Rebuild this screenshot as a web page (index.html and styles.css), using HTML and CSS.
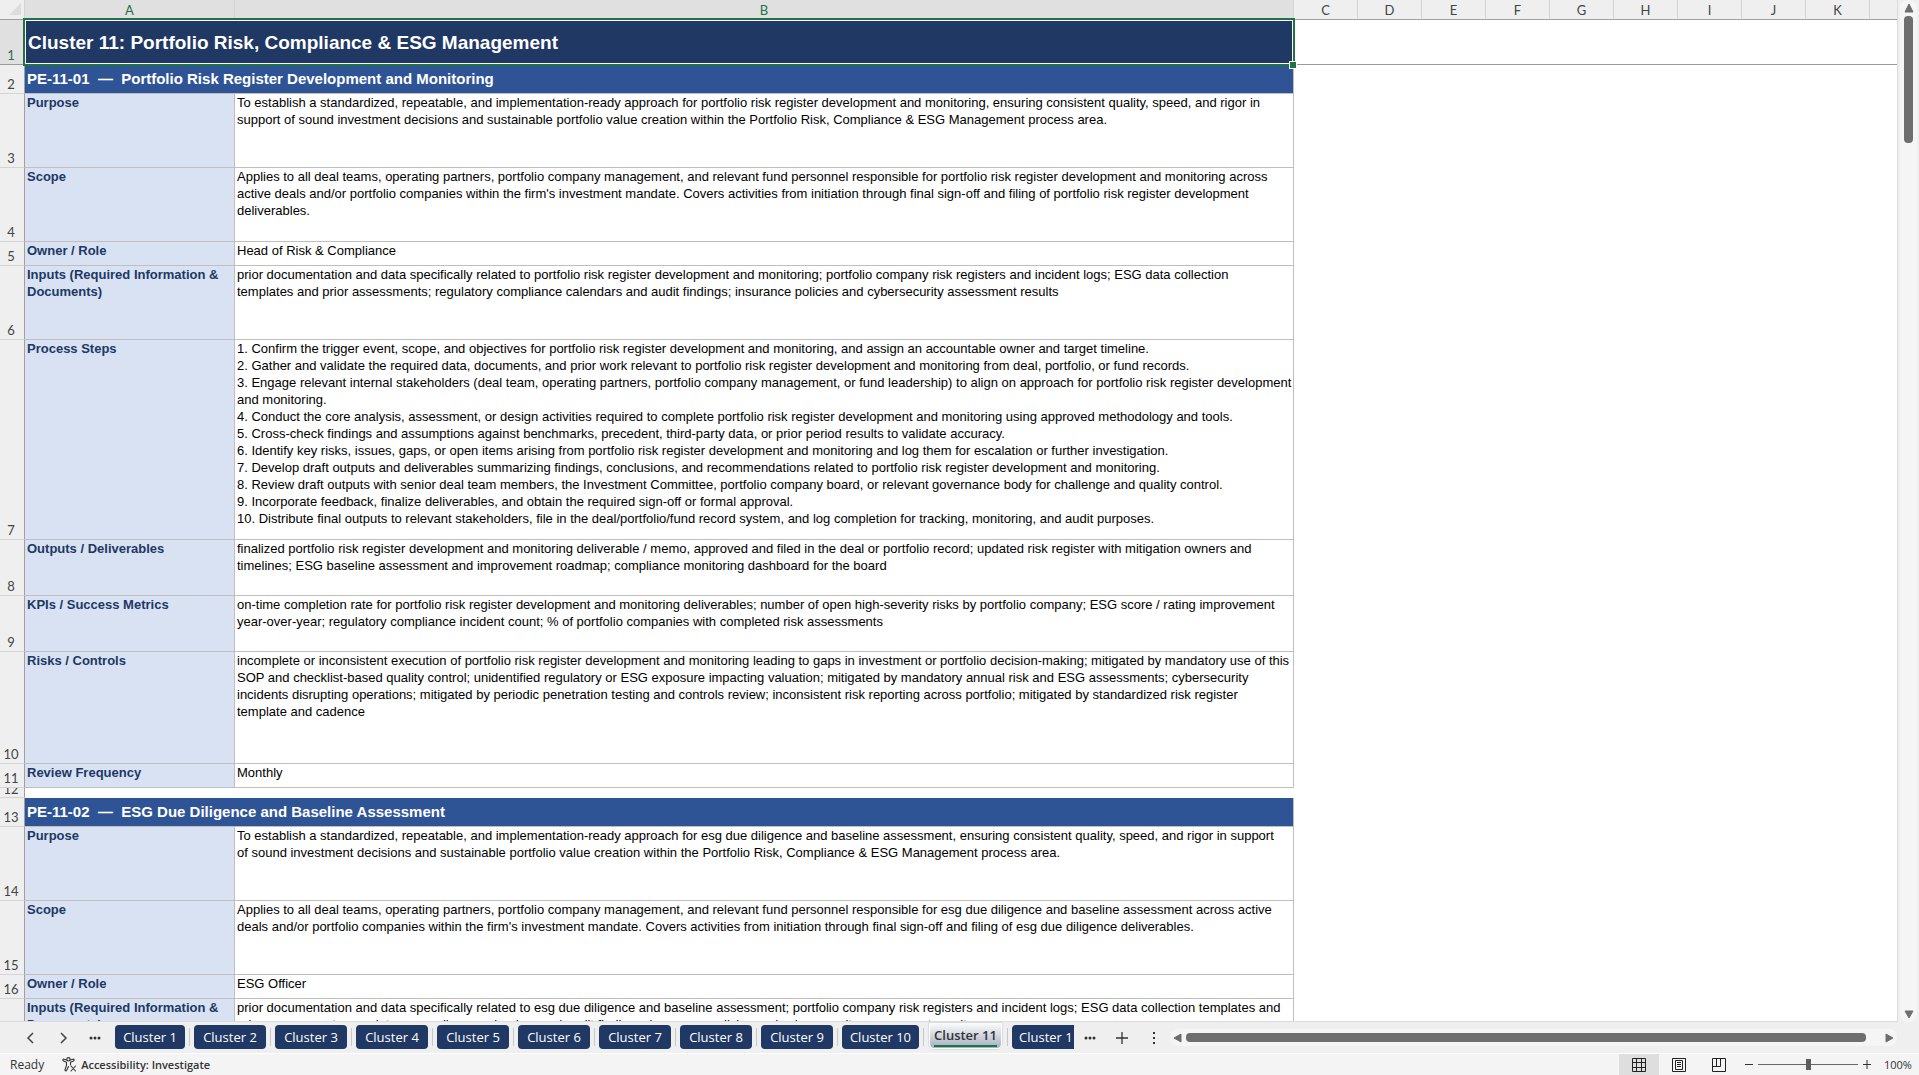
FILE: index.html
```
<!DOCTYPE html>
<html lang="en">
<head>
  <meta charset="UTF-8" />
  <meta name="viewport" content="width=device-width, initial-scale=1" />
  <title>Cluster 11</title>
  <link rel="stylesheet" href="styles.css">
</head>
<body>
  <div class="workspace">
    <div class="grid-area">
      <table class="sheet">
        <colgroup>
          <col class="col-num"><col class="col-a"><col class="col-b">
          <col class="col-std"><col class="col-std"><col class="col-std"><col class="col-std"><col class="col-std">
          <col class="col-std"><col class="col-std"><col class="col-std"><col class="col-std"><col>
        </colgroup>
        <thead>
          <tr>
            <th class="corner"><svg width="12" height="12" viewBox="0 0 12 12" aria-hidden="true"><path d="M12 0v12H0z" fill="#dcdcdc"/></svg></th>
            <th class="active">A</th><th class="active">B</th>
            <th>C</th><th>D</th><th>E</th><th>F</th><th>G</th><th>H</th><th>I</th><th>J</th><th>K</th><th></th>
          </tr>
        </thead>
        <tbody>
          <tr class="row-title">
            <th class="active">1</th>
            <td class="title" colspan="2">Cluster 11: Portfolio Risk, Compliance &amp; ESG Management<span class="selection"></span><span class="handle"></span></td>
            <td class="blank" colspan="10"></td>
          </tr>
          <tr class="row-section">
            <th>2</th>
            <td class="section" colspan="2">PE-11-01 &nbsp;—&nbsp; Portfolio Risk Register Development and Monitoring</td>
            <td class="blank" colspan="10"></td>
          </tr>
          <tr class="row-medium">
            <th>3</th>
            <td class="label">Purpose</td>
            <td class="text">To establish a standardized, repeatable, and implementation-ready approach for portfolio risk register development and monitoring, ensuring consistent quality, speed, and rigor in<br>support of sound investment decisions and sustainable portfolio value creation within the Portfolio Risk, Compliance &amp; ESG Management process area.</td>
            <td class="blank" colspan="10"></td>
          </tr>
          <tr class="row-medium">
            <th>4</th>
            <td class="label">Scope</td>
            <td class="text">Applies to all deal teams, operating partners, portfolio company management, and relevant fund personnel responsible for portfolio risk register development and monitoring across<br>active deals and/or portfolio companies within the firm's investment mandate. Covers activities from initiation through final sign-off and filing of portfolio risk register development<br>deliverables.</td>
            <td class="blank" colspan="10"></td>
          </tr>
          <tr class="row-single">
            <th>5</th>
            <td class="label">Owner / Role</td>
            <td class="text">Head of Risk &amp; Compliance</td>
            <td class="blank" colspan="10"></td>
          </tr>
          <tr class="row-medium">
            <th>6</th>
            <td class="label">Inputs (Required Information &amp;<br>Documents)</td>
            <td class="text">prior documentation and data specifically related to portfolio risk register development and monitoring; portfolio company risk registers and incident logs; ESG data collection<br>templates and prior assessments; regulatory compliance calendars and audit findings; insurance policies and cybersecurity assessment results</td>
            <td class="blank" colspan="10"></td>
          </tr>
          <tr class="row-steps">
            <th>7</th>
            <td class="label">Process Steps</td>
            <td class="text">1. Confirm the trigger event, scope, and objectives for portfolio risk register development and monitoring, and assign an accountable owner and target timeline.<br>2. Gather and validate the required data, documents, and prior work relevant to portfolio risk register development and monitoring from deal, portfolio, or fund records.<br>3. Engage relevant internal stakeholders (deal team, operating partners, portfolio company management, or fund leadership) to align on approach for portfolio risk register development<br>and monitoring.<br>4. Conduct the core analysis, assessment, or design activities required to complete portfolio risk register development and monitoring using approved methodology and tools.<br>5. Cross-check findings and assumptions against benchmarks, precedent, third-party data, or prior period results to validate accuracy.<br>6. Identify key risks, issues, gaps, or open items arising from portfolio risk register development and monitoring and log them for escalation or further investigation.<br>7. Develop draft outputs and deliverables summarizing findings, conclusions, and recommendations related to portfolio risk register development and monitoring.<br>8. Review draft outputs with senior deal team members, the Investment Committee, portfolio company board, or relevant governance body for challenge and quality control.<br>9. Incorporate feedback, finalize deliverables, and obtain the required sign-off or formal approval.<br>10. Distribute final outputs to relevant stakeholders, file in the deal/portfolio/fund record system, and log completion for tracking, monitoring, and audit purposes.</td>
            <td class="blank" colspan="10"></td>
          </tr>
          <tr class="row-short">
            <th>8</th>
            <td class="label">Outputs / Deliverables</td>
            <td class="text">finalized portfolio risk register development and monitoring deliverable / memo, approved and filed in the deal or portfolio record; updated risk register with mitigation owners and<br>timelines; ESG baseline assessment and improvement roadmap; compliance monitoring dashboard for the board</td>
            <td class="blank" colspan="10"></td>
          </tr>
          <tr class="row-short">
            <th>9</th>
            <td class="label">KPIs / Success Metrics</td>
            <td class="text">on-time completion rate for portfolio risk register development and monitoring deliverables; number of open high-severity risks by portfolio company; ESG score / rating improvement<br>year-over-year; regulatory compliance incident count; % of portfolio companies with completed risk assessments</td>
            <td class="blank" colspan="10"></td>
          </tr>
          <tr class="row-risks">
            <th>10</th>
            <td class="label">Risks / Controls</td>
            <td class="text">incomplete or inconsistent execution of portfolio risk register development and monitoring leading to gaps in investment or portfolio decision-making; mitigated by mandatory use of this<br>SOP and checklist-based quality control; unidentified regulatory or ESG exposure impacting valuation; mitigated by mandatory annual risk and ESG assessments; cybersecurity<br>incidents disrupting operations; mitigated by periodic penetration testing and controls review; inconsistent risk reporting across portfolio; mitigated by standardized risk register<br>template and cadence</td>
            <td class="blank" colspan="10"></td>
          </tr>
          <tr class="row-single">
            <th>11</th>
            <td class="label">Review Frequency</td>
            <td class="text">Monthly</td>
            <td class="blank" colspan="10"></td>
          </tr>
          <tr class="row-gap">
            <th><div class="clipped">12</div></th>
            <td class="blank" colspan="12"></td>
          </tr>
          <tr class="row-section">
            <th>13</th>
            <td class="section" colspan="2">PE-11-02 &nbsp;—&nbsp; ESG Due Diligence and Baseline Assessment</td>
            <td class="blank" colspan="10"></td>
          </tr>
          <tr class="row-medium">
            <th>14</th>
            <td class="label">Purpose</td>
            <td class="text">To establish a standardized, repeatable, and implementation-ready approach for esg due diligence and baseline assessment, ensuring consistent quality, speed, and rigor in support<br>of sound investment decisions and sustainable portfolio value creation within the Portfolio Risk, Compliance &amp; ESG Management process area.</td>
            <td class="blank" colspan="10"></td>
          </tr>
          <tr class="row-medium">
            <th>15</th>
            <td class="label">Scope</td>
            <td class="text">Applies to all deal teams, operating partners, portfolio company management, and relevant fund personnel responsible for esg due diligence and baseline assessment across active<br>deals and/or portfolio companies within the firm's investment mandate. Covers activities from initiation through final sign-off and filing of esg due diligence deliverables.</td>
            <td class="blank" colspan="10"></td>
          </tr>
          <tr class="row-single">
            <th>16</th>
            <td class="label">Owner / Role</td>
            <td class="text">ESG Officer</td>
            <td class="blank" colspan="10"></td>
          </tr>
          <tr class="row-medium">
            <th></th>
            <td class="label">Inputs (Required Information &amp;<br>Documents)</td>
            <td class="text">prior documentation and data specifically related to esg due diligence and baseline assessment; portfolio company risk registers and incident logs; ESG data collection templates and<br>prior assessments; regulatory compliance calendars and audit findings; insurance policies and cybersecurity assessment results</td>
            <td class="blank" colspan="10"></td>
          </tr>
        </tbody>
      </table>
    </div>
    <div class="vscroll">
      <button class="arrow" aria-label="Scroll up"><svg width="10" height="10" viewBox="0 0 10 10"><path d="M5 1l4 8H1z" fill="#6e6e6e" stroke="#6e6e6e" stroke-linejoin="round"/></svg></button>
      <div class="vthumb"></div>
      <button class="arrow" aria-label="Scroll down"><svg width="10" height="10" viewBox="0 0 10 10"><path d="M5 9l4-7H1z" fill="#6e6e6e" stroke="#6e6e6e" stroke-linejoin="round"/></svg></button>
    </div>
  </div>

  <div class="tab-bar">
    <div class="tab-nav">
      <button aria-label="Previous sheet"><svg width="10" height="12" viewBox="0 0 10 12"><path d="M7 1L2 6l5 5" fill="none" stroke="#444" stroke-width="1.5"/></svg></button>
      <button aria-label="Next sheet"><svg width="10" height="12" viewBox="0 0 10 12"><path d="M3 1l5 5-5 5" fill="none" stroke="#444" stroke-width="1.5"/></svg></button>
      <button aria-label="More sheets"><svg width="12" height="4" viewBox="0 0 12 4"><g fill="#333"><circle cx="2" cy="2" r="1.5"/><circle cx="6" cy="2" r="1.5"/><circle cx="10" cy="2" r="1.5"/></g></svg></button>
    </div>
    <div class="tabs">
      <button class="tab first">Cluster 1</button>
      <i class="sep"></i>
      <button class="tab">Cluster 2</button>
      <i class="sep"></i>
      <button class="tab">Cluster 3</button>
      <i class="sep"></i>
      <button class="tab">Cluster 4</button>
      <i class="sep"></i>
      <button class="tab">Cluster 5</button>
      <i class="sep"></i>
      <button class="tab">Cluster 6</button>
      <i class="sep"></i>
      <button class="tab">Cluster 7</button>
      <i class="sep"></i>
      <button class="tab">Cluster 8</button>
      <i class="sep"></i>
      <button class="tab">Cluster 9</button>
      <i class="sep"></i>
      <button class="tab wide">Cluster 10</button>
      <i class="sep"></i>
      <button class="tab current"><span>Cluster 11</span></button>
      <i class="sep"></i>
      <button class="tab cut">Cluster 1</button>
    </div>
    <div class="tab-tools">
      <button aria-label="More sheets"><svg width="12" height="4" viewBox="0 0 12 4"><g fill="#333"><circle cx="2" cy="2" r="1.5"/><circle cx="6" cy="2" r="1.5"/><circle cx="10" cy="2" r="1.5"/></g></svg></button>
      <button aria-label="New sheet"><svg width="12" height="12" viewBox="0 0 12 12"><path d="M6 0v12M0 6h12" stroke="#333" stroke-width="1.3"/></svg></button>
      <button aria-label="Resize tabs"><svg width="4" height="12" viewBox="0 0 4 12"><g fill="#333"><rect x="1" y="0" width="2" height="2"/><rect x="1" y="5" width="2" height="2"/><rect x="1" y="10" width="2" height="2"/></g></svg></button>
    </div>
    <div class="hscroll">
      <button class="arrow" aria-label="Scroll left"><svg width="10" height="10" viewBox="0 0 10 10"><path d="M1 5l7-4v8z" fill="#6e6e6e" stroke="#6e6e6e" stroke-linejoin="round"/></svg></button>
      <div class="hthumb"></div>
      <button class="arrow" aria-label="Scroll right"><svg width="10" height="10" viewBox="0 0 10 10"><path d="M9 5L2 1v8z" fill="#6e6e6e" stroke="#6e6e6e" stroke-linejoin="round"/></svg></button>
    </div>
  </div>

  <div class="status-bar">
    <span class="ready">Ready</span>
    <button class="access">
      <svg width="15" height="15" viewBox="0 0 15 15" fill="none" stroke="#333" stroke-width="1.1" stroke-linecap="round" stroke-linejoin="round"><circle cx="6.5" cy="2.3" r="1.7"/><path d="M4.8 3L2 2.2C.8 2 .4 3.6 1.5 4l3 1.2v3L3 12.6c-.3 1.3 1.2 1.7 1.7.6L6.500 9.500M8.200 3L11 2.200c1.200-.2 1.600 1.400.5 1.800L8.500 5.200v2.600M9 9l4.500 5M13.500 9L9 14"/></svg>
      <span>Accessibility: Investigate</span>
    </button>
    <div class="views">
      <button class="view on" aria-label="Normal"><svg width="14" height="14" viewBox="0 0 14 14" fill="none" stroke="#222"><path d="M.5.5h13v13H.5zM.5 4.500h13M.5 9.500h13M4.500.5v13M9.500.5v13"/></svg></button>
      <button class="view" aria-label="Page Layout"><svg width="14" height="14" viewBox="0 0 14 14" fill="none" stroke="#222"><path d="M.5.5h13v13H.5zM3.500 2.500h7v9h-7zM5 4.500h4M5 6.500h4M5 8.500h4"/></svg></button>
      <button class="view" aria-label="Page Break Preview"><svg width="14" height="14" viewBox="0 0 14 14" fill="none" stroke="#222"><path d="M.5.5h13v13H.5zM.5 8.500h8v-8M4.500.5v8"/></svg></button>
    </div>
    <div class="zoom">
      <button aria-label="Zoom out"><svg width="8" height="9" viewBox="0 0 8 9"><path d="M0 4.500h8" stroke="#333"/></svg></button>
      <input type="range" min="0" max="100" value="50" aria-label="Zoom">
      <button aria-label="Zoom in"><svg width="8" height="9" viewBox="0 0 8 9"><path d="M0 4.500h8M4 0v9" stroke="#333"/></svg></button>
      <span class="percent">100%</span>
    </div>
  </div>
</body>
</html>
```

FILE: styles.css
```
* {
  box-sizing: border-box;
}

body {
  margin: 0;
  height: 100vh;
  display: flex;
  flex-direction: column;
  overflow: hidden;
  background: #efefef;
  font-family: "Liberation Sans", Arial, sans-serif;
}

button {
  display: flex;
  align-items: center;
  justify-content: center;
  padding: 0;
  border: none;
  background: none;
  font-family: inherit;
  color: inherit;
}

/* Grid */
.workspace {
  flex: 1;
  min-height: 0;
  display: flex;
}

.grid-area {
  flex: 1;
  min-width: 0;
  overflow: hidden;
  background: #fff;
  border-right: 1px solid #dcdcdc;
  border-bottom: 1px solid #dcdcdc;
}

.sheet {
  width: 100%;
  table-layout: fixed;
  border-collapse: separate;
  border-spacing: 0;
}

.col-num { width: 25px; }
.col-a { width: 210px; }
.col-b { width: 1059px; }
.col-std { width: 64px; }

.sheet th {
  padding: 0 2px 1px 0;
  background: #efefef;
  color: #444;
  font-family: Lato, sans-serif;
  font-size: 13px;
  font-weight: normal;
  line-height: 16px;
}

.sheet thead th {
  height: 20px;
  padding-right: 0;
  border-right: 1px solid #d4d4d4;
  border-bottom: 1px solid #a0a0a0;
  vertical-align: bottom;
}

.sheet thead th:last-child {
  border-right: none;
}

.sheet thead th.corner {
  padding-right: 3px;
  text-align: right;
  line-height: 0;
  vertical-align: middle;
}

.sheet tbody th {
  border-right: 1px solid #a0a0a0;
  border-bottom: 1px solid #d4d4d4;
  vertical-align: bottom;
}

.sheet th.active {
  background: #e0e0e0;
  color: #217346;
}

.sheet td {
  padding: 0 2px;
  font-size: 13px;
  line-height: 17px;
  white-space: nowrap;
  vertical-align: top;
}

.row-title { height: 45px; }
.row-section { height: 29px; }
.row-single { height: 24px; }
.row-medium { height: 74px; }
.row-short { height: 56px; }
.row-risks { height: 112px; }
.row-steps { height: 200px; }
.row-gap { height: 10px; }

.sheet .title {
  position: relative;
  background: #203864;
  color: #fff;
  font-size: 19px;
  font-weight: bold;
  vertical-align: middle;
  padding-left: 3px;
}

.sheet .row-title th,
.sheet .row-title .blank {
  border-bottom: 1px solid #9a9a9a;
}

.selection {
  position: absolute;
  inset: -2px -1px -1px -2px;
  border: 2px solid #217346;
  box-shadow: inset 0 0 0 1px #fff;
}

.handle {
  position: absolute;
  right: -2px;
  bottom: -3px;
  width: 6px;
  height: 6px;
  background: #217346;
  box-shadow: 0 0 0 1px #fff;
}

.sheet .section {
  padding-bottom: 2px;
  background: #2f5496;
  color: #fff;
  font-size: 15px;
  font-weight: bold;
  vertical-align: middle;
  border-right: 1px solid #bfbfbf;
  border-bottom: 1px solid #bfbfbf;
}

.sheet .label {
  background: #d9e2f3;
  color: #203864;
  font-weight: bold;
  border-right: 1px solid #bfbfbf;
  border-bottom: 1px solid #bfbfbf;
}

.sheet .text {
  color: #000;
  border-right: 1px solid #bfbfbf;
  border-bottom: 1px solid #bfbfbf;
}

.sheet .blank {
  padding: 0;
}

.row-gap .blank {
  line-height: 0;
}

.sheet .row-gap th {
  padding-bottom: 0;
}

.clipped {
  display: flex;
  align-items: flex-end;
  justify-content: center;
  height: 9px;
  overflow: hidden;
}

/* Scroll bars */
.arrow {
  flex: none;
  width: 16px;
  height: 16px;
}

.vscroll {
  width: 17px;
  margin: 0 2px;
  display: flex;
  flex-direction: column;
  align-items: center;
  background: #f5f5f5;
  border-radius: 8px;
}

.vthumb {
  width: 9px;
  height: 127px;
  margin-bottom: auto;
  background: #6e6e6e;
  border-radius: 4px;
}

.hscroll {
  flex: 1;
  height: 17px;
  margin-right: 22px;
  display: flex;
  align-items: center;
  background: #f5f5f5;
  border-radius: 8px;
}

.hthumb {
  flex: 1;
  height: 9px;
  margin-right: 15px;
  background: #6e6e6e;
  border-radius: 4px;
}

/* Sheet tabs */
.tab-bar {
  height: 32px;
  display: flex;
  align-items: center;
  border-bottom: 1px solid #fff;
  font-family: "Open Sans", "Noto Sans", sans-serif;
}

.tab-nav {
  display: flex;
  width: 115px;
  padding-left: 15px;
}

.tab-nav button {
  width: 32px;
  height: 24px;
}

.tabs {
  display: flex;
  align-self: stretch;
  align-items: flex-start;
  width: 959px;
  padding-top: 3px;
}

.tab {
  flex: none;
  width: 72px;
  height: 24px;
  background: #203864;
  color: #fff;
  border-radius: 4px;
  font-size: 13px;
}

.tab.first {
  width: 70px;
}

.tab.wide {
  width: 77px;
}

.sep {
  flex: none;
  width: 1px;
  height: 18px;
  margin: 3px 4px;
  background: #c8c8c8;
}

.tab.current {
  width: 75px;
  height: 28px;
  margin-top: -3px;
  padding-top: 1px;
  background: linear-gradient(#fff, #a6afc1) padding-box;
  color: #333;
  font-weight: 600;
  border: 2px solid #fff;
  border-top: none;
  outline: 1px solid #dcdcdc;
  outline-offset: -1px;
  clip-path: inset(-1px 0 0 0);
  border-radius: 0 0 6px 6px;
}

.tab.current span {
  line-height: 20px;
  border-bottom: 2px solid #107c41;
}

.tab.cut {
  width: 62px;
  padding-left: 7px;
  justify-content: flex-start;
  border-radius: 4px 0 0 4px;
}

.tab-tools {
  display: flex;
}

.tab-tools button {
  width: 32px;
  height: 24px;
}

/* Status bar */
.status-bar {
  height: 21px;
  display: flex;
  align-items: center;
  background: #f4f4f4;
  color: #333;
  font-family: "Open Sans", "Noto Sans", sans-serif;
  font-size: 12px;
}

.ready {
  margin: 0 18px 0 10px;
}

.access {
  gap: 4px;
  font-size: 11px;
  font-weight: 600;
}

.views {
  display: flex;
  margin-left: auto;
}

.view {
  width: 40px;
  height: 21px;
}

.view.on {
  background: #dedede;
}

.zoom {
  display: flex;
  align-items: center;
  gap: 5px;
  padding: 0 7px 0 6px;
}

.zoom input {
  width: 100px;
  height: 11px;
  margin: 0;
  appearance: none;
  background: linear-gradient(#666, #666) center / 100% 1px no-repeat;
}

.zoom input::-webkit-slider-thumb {
  appearance: none;
  width: 5px;
  height: 11px;
  background: #5e5e5e;
}

.percent {
  width: 28px;
  margin-left: 8px;
  font-size: 11px;
}
```
